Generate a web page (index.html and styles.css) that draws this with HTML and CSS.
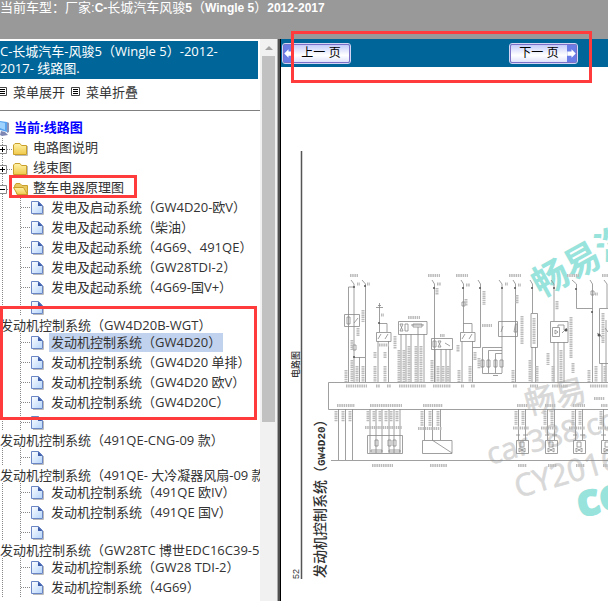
FILE: index.html
```html
<!DOCTYPE html>
<html lang="zh-CN">
<head>
  <meta charset="UTF-8">
  <title>线路图</title>
  <link rel="stylesheet" href="styles.css">
</head>
<body>
  <!-- shared icons -->
  <svg class="defs" width="0" height="0">
    <defs>
      <linearGradient id="pageFill" x1="0" y1="0" x2="1" y2="1">
        <stop offset="0" stop-color="#fff"/>
        <stop offset="1" stop-color="#b4d4fa"/>
      </linearGradient>
      <linearGradient id="folderFill" x1="0" y1="0" x2="0" y2="1">
        <stop offset="0" stop-color="#fff3a8"/>
        <stop offset="1" stop-color="#f0c94c"/>
      </linearGradient>
      <symbol id="leaf">
        <path d="M2.500 0V20M20.500 0V20M21 9.500H31" class="dots"/>
        <path d="M33 16.500H43.500V8" class="shade"/>
        <path d="M31.500 3.500H38.500L42.500 7.500V15.500H31.500Z" fill="url(#pageFill)" stroke="#6b86c4"/>
        <path d="M38 3.500V8H42.500Z" fill="#3c5ba8"/>
      </symbol>
      <symbol id="folder">
        <path d="M2.500 0V20M7 11.500H13" class="dots"/>
        <path d="M-2.500 7.500H6.500V15.500H-2.500Z" fill="#fff" stroke="#888"/>
        <path d="M0 11.500H5M2.500 9V14" stroke="#000"/>
        <path d="M15 17.500H27.500V8" class="shade"/>
        <path d="M13.500 7L15 5.500H20L21.500 7.500H26.500V16.500H13.500Z" fill="url(#folderFill)" stroke="#c9a02c"/>
      </symbol>
      <symbol id="folder-open">
        <path d="M2.500 0V20M7 11.500H13" class="dots"/>
        <path d="M-2.500 7.500H6.500V15.500H-2.500Z" fill="#fff" stroke="#888"/>
        <path d="M0 11.500H5" stroke="#000"/>
        <path d="M16 17.500H28" class="shade"/>
        <path d="M14.500 8L16 5.500H20L22 7.500H27.500V16.500H17Z" fill="#e8c860" stroke="#c9a02c"/>
        <path d="M13.500 9.500H23.500L27.500 16.500H17.500Z" fill="url(#folderFill)" stroke="#c9a02c"/>
      </symbol>
      <symbol id="list" viewBox="0 0 9 9">
        <path d="M.5 .5H8.500V8.500H.5Z" fill="#fff" stroke="#444"/>
        <path d="M2 2.500H7M2 4.500H7M2 6.500H7" stroke="#000"/>
      </symbol>
    </defs>
  </svg>

  <header class="top">当前车型：厂家:<b>C-</b>长城汽车风骏<b>5</b>（<b>Wingle 5</b>）<b>2012-2017</b></header>

  <div class="frames">
    <nav class="side">
      <div class="menu">
        <h1 class="title">C-长城汽车-风骏5（Wingle 5）-2012-2017- 线路图.</h1>
        <div class="tools">
          <svg class="list-icon cut" viewBox="2 0 7 9"><use href="#list" width="9" height="9"/></svg>
          <a href="#">菜单展开</a>
          <svg class="list-icon" viewBox="0 0 9 9"><use href="#list" width="9" height="9"/></svg>
          <a href="#">菜单折叠</a>
        </div>

        <ul class="tree">
          <li class="root">
            <svg class="pc" viewBox="0 0 14 20">
              <path d="M0 3L7 4V14L0 12Z" fill="#5aa5ee"/>
              <path d="M0 4L5 5V12L0 10Z" fill="#9fd3ff"/>
              <path d="M7 4L9 5V14L7 15Z" fill="#8a93b5"/>
              <path d="M1 13L5 14L8 17L2 18L0 17Z" fill="#7d87b2"/>
            </svg>
            <a href="#">当前:线路图</a>
          </li>
          <li><svg class="branch"><use href="#folder"/></svg><a href="#">电路图说明</a></li>
          <li><svg class="branch"><use href="#folder"/></svg><a href="#">线束图</a></li>
          <li><svg class="branch"><use href="#folder-open"/></svg><a href="#">整车电器原理图</a></li>
          <li><svg class="twig"><use href="#leaf"/></svg><a href="#">发电及启动系统（GW4D20-欧V）</a></li>
          <li><svg class="twig"><use href="#leaf"/></svg><a href="#">发电及起动系统（柴油）</a></li>
          <li><svg class="twig"><use href="#leaf"/></svg><a href="#">发电及起动系统（4G69、491QE）</a></li>
          <li><svg class="twig"><use href="#leaf"/></svg><a href="#">发电及起动系统（GW28TDI-2）</a></li>
          <li><svg class="twig"><use href="#leaf"/></svg><a href="#">发电及起动系统（4G69-国V+）</a></li>
          <li class="wrap"><svg class="twig"><use href="#leaf"/></svg><a href="#">发动机控制系统（GW4D20B-WGT）</a></li>
          <li><svg class="twig"><use href="#leaf"/></svg><a href="#" class="current">发动机控制系统（GW4D20）</a></li>
          <li><svg class="twig"><use href="#leaf"/></svg><a href="#">发动机控制系统（GW4D20 单排）</a></li>
          <li><svg class="twig"><use href="#leaf"/></svg><a href="#">发动机控制系统（GW4D20 欧V）</a></li>
          <li><svg class="twig"><use href="#leaf"/></svg><a href="#">发动机控制系统（GW4D20C）</a></li>
          <li class="wrap"><svg class="twig"><use href="#leaf"/></svg><a href="#">发动机控制系统（491QE-CNG-09 款）</a></li>
          <li class="wrap"><svg class="twig"><use href="#leaf"/></svg><a href="#">发动机控制系统（491QE- 大冷凝器风扇-09 款）</a></li>
          <li><svg class="twig"><use href="#leaf"/></svg><a href="#">发动机控制系统（491QE 欧IV）</a></li>
          <li><svg class="twig"><use href="#leaf"/></svg><a href="#">发动机控制系统（491QE 国V）</a></li>
          <li class="wrap"><svg class="twig"><use href="#leaf"/></svg><a href="#">发动机控制系统（GW28TC 博世EDC16C39-5）</a></li>
          <li><svg class="twig"><use href="#leaf"/></svg><a href="#">发动机控制系统（GW28 TDI-2）</a></li>
          <li><svg class="twig"><use href="#leaf"/></svg><a href="#">发动机控制系统（4G69）</a></li>
        </ul>
      </div>
      <div class="scrollbar">
        <div class="arrow"></div>
        <div class="thumb"></div>
      </div>
    </nav>

    <div class="splitter"></div>

    <main class="view">
      <div class="pager">
        <button type="button" class="prev">
          <svg viewBox="0 0 8 16"><path d="M0 8L4 4V6H8V10H4V12Z" fill="#fff"/></svg>
          <span>上一 页</span>
        </button>
        <button type="button" class="next">
          <span>下一 页</span>
          <svg viewBox="0 0 8 16"><path d="M8 8L4 4V6H0V10H4V12Z" fill="#fff"/></svg>
        </button>
      </div>

      <svg class="sheet" viewBox="281 67 327 534">
        <!-- watermarks -->
        <text class="mark-teal" font-size="36" transform="translate(541 298) rotate(-29)">畅易汽车</text>
        <text class="mark-teal co" font-size="44" transform="translate(580 517) rotate(-12)">co</text>
        <text class="mark-grey" font-size="31" transform="translate(528 415) rotate(-14)">畅易</text>
        <text class="mark-grey" font-size="30" transform="translate(490 465) rotate(-16)">car388.co</text>
        <text class="mark-grey" font-size="31" transform="translate(518 498) rotate(-16)">CY2016</text>

        <!-- sheet margin -->
        <path d="M301.500 151V579" stroke="#555" stroke-width="1.500"/>
        <text class="caption" font-size="9" transform="translate(299 378) rotate(-90)">电路图</text>
        <text class="caption" font-size="9" transform="translate(299 579) rotate(-90)">52</text>
        <text class="caption" font-size="14" transform="translate(325 578) rotate(-90)">发动机控制系统（<tspan class="mono">GW4D20</tspan>）</text>

        <!-- control unit and ground rail -->
        <path class="wire" d="M620 382.500H328.500V409.500H620M331 460.500H620"/>

        <!-- upper half -->
        <path class="wire" d="M351 280L354 284V382M354 287H348.500V382M362 280L365.500 284V382M354 357.500H365M359.500 357V382"/>
        <path class="wire" d="M344.500 314.500H359.500V326.500H344.500ZM347 317V324H350V317ZM354 323L358 318M353 345H356V350H353Z"/>
        <path class="wire" d="M376 307.500H383M378 305.500H381M379.500 303V332M379.500 323.500H387V332M378 341V382M388.500 341V382"/>
        <path class="wire" d="M376.500 332.500H391V341.500H376.500ZM378 339L381 334M385 339L388 334"/>
        <path class="wire" d="M398.500 321.500H427V334.500H398.500ZM400 324L403 331H400L403 324ZM405 324H408V331H405ZM411 325H424M413 324V327H422V324ZM418 327V334M401 334V382M406 334V382M411 334V382M418 334V382M424 334V382"/>
        <path class="wire" d="M432 280L434.500 284V382M431.500 338.500H452.500V349.500H431.500ZM433 341H436V347H433ZM438 341L441 347H438L441 341ZM445 343L450 346M435 349V382M441 349V382M446 349V382M450 349V382"/>
        <path class="wire" d="M461 280L463.500 284V332M462 302H465V306H462ZM463.500 323.500H472V332M460.500 332.500H475V341.500H460.500ZM462 339L465 334M469 339L472 334M462 341V382M472.500 341V382M478 280L480.500 284V347.500H472.500"/>
        <path class="wire" d="M499 280L502 284V373M513 280L515.500 284V382M498.500 321.500H517.500V336.500H498.500ZM501 332L503 326M515.500 324H517V332H514Z"/>
        <path class="wire" d="M502 347.500H482.500V373.500H502M502 350.500H488.500V373M502 353.500H495.500V373M493 375.500H498M481 360H484V367H481ZM487 360H490V367H487ZM494 360H497V367H494ZM500 360H503V367H500Z"/>
        <path class="wire" d="M530 280L532.500 284V313M531 313.500H537.500V347.500H531ZM532 347V382M535.500 347V382"/>
        <path class="wire" d="M551 280L554 284V321M550.500 321.500H568V342.500H550.500ZM552.500 327.500H559.500V336.500H552.500ZM555 330L558 332L555 334ZM562 333L567 328M558 327V325H564V330M554 342V382M558 342V382M564 342V382"/>
        <path class="wire" d="M572 280L576.500 284V308.500H592.500M590 280L592.500 284V382M591 291H594V295H591ZM604 280L607 284V308M620 308.500H599.500V363.500H620M602 363V382M606 320V382M597 333L602 337M605 328L608 332"/>
        <g fill="#555">
          <circle cx="354" cy="287" r="1"/><circle cx="365" cy="286" r="1"/><circle cx="354" cy="357" r="1"/>
          <circle cx="379" cy="323" r="1"/><circle cx="434" cy="288" r="1"/><circle cx="463" cy="288" r="1"/>
          <circle cx="480" cy="288" r="1"/><circle cx="502" cy="288" r="1"/><circle cx="515" cy="288" r="1"/>
          <circle cx="532" cy="288" r="1"/><circle cx="554" cy="288" r="1"/><circle cx="576" cy="289" r="1"/>
          <circle cx="592" cy="312" r="1"/><circle cx="599" cy="335" r="1.500"/><circle cx="566" cy="330" r="1.500"/>
        </g>

        <!-- lower half -->
        <path class="wire" d="M338.500 409V460M345.500 409V460M352.500 409V460"/>
        <path class="wire" d="M370 409V453M376 409V453M382 409V453M389 409V453M394 409V453M400 409V453M367.500 435.500H402.500V453.500H367.500ZM375 440H378V446H375ZM388 440H391V446H388ZM393 440H396V446H393ZM371 450H382V452H371ZM389 450H400V452H389Z"/>
        <path class="wire" d="M424.500 409V440M432.500 409V440M440.500 409V440M422.500 440.500H452V453.500H422.500ZM432 440L452 453"/>
        <path class="wire" d="M518.500 409V440M525.500 409V440M516.500 440.500H528.500V453.500H516.500ZM520 442H524V447H520ZM519 448L525 452V448L519 452Z"/>
        <path class="wire" d="M547.500 409V440M554.500 409V440M545.500 440.500H557.500V453.500H545.500ZM549 442H553V447H549ZM548 448L554 452V448L548 452Z"/>
        <path class="wire" d="M575.500 409V440M582.500 409V440M573.500 440.500H585.500V453.500H573.500ZM577 442H581V447H577ZM576 448L582 452V448L576 452Z"/>
        <path class="wire" d="M603.500 409V440M601.500 440.500H613V453.500H601.500ZM605 442H609V447H605ZM604 448L610 452V448L604 452Z"/>
        <path class="wire" d="M516 435H520M523 435H528M545 435H549M552 435H557M573 435H577M580 435H585M601 435H606"/>

        <!-- wire codes, too small to read -->
        <path class="note" d="M350 275.500H358M428 275.500H440M456 275.500H468M509 275.500H521M567 275.500H579M602 275.500H608M408 317.500H420M440 335.500H445M482 325.500H492M379 345H389M357 284H360M367 284H370M437 284H441M466 285H470M505 284H508M518 285H521M381 315H384M595 294H598M594 398.500H605"/>
        <path class="note" d="M346 386H367M376 386H380M387 386H391M399 386H426M433 386H451M461 386H464M471 386H475M513 386H517M530 386H538M552 386H568M590 386H610M337 405.500H355M370 405.500H402M423 405.500H443M517 405.500H528M545 405.500H556M573 405.500H585M601 405.500H608"/>
        <path class="note" d="M372 465.500H393M430 465.500H447M518 465.500H527M548 465.500H557M576 465.500H585M603 465.500H608M365 427.500H402M418 428.500H442M513 428H529M541 428H557M569 428H585M598 428H608"/>
        <path class="note" d="M346 370V382M352 360V382M357 366V382M363 366V382M363 310V322M352 340V350M358 328V336M375 352V358M385 352V358M375 366V382M385 366V382M395 336V349M399 350V382M404 350V382M409 346V382M416 346V382M421 346V382M432 360V382M438 366V382M443 366V382M448 366V382M459 370V382M470 366V382"/>
        <path class="note" d="M437 288V295M484 291V305M466 299V306M479 358V369M458 345V352M475 352V360M513 370V382M517 295V304M522 316V344M534 318V344M530 360V382M537 366V382M557 301V310M571 317V358M548 353V365M553 366V382M561 350V382M573 363V373M589 370V382M596 366V382M603 313V343M605 366V382"/>
        <path class="note" d="M336 411V422M343 411V422M350 411V422M368 411V422M374 411V422M380 411V422M386 411V422M391 411V422M397 411V422M422 411V426M430 411V426M438 411V426M516 411V425M523 411V425M545 411V425M552 411V425M573 411V425M580 411V425M601 411V425"/>
      </svg>
    </main>
  </div>

  <!-- highlight frames -->
  <div class="hint hint-folder"></div>
  <div class="hint hint-items"></div>
  <div class="hint hint-pager"></div>
</body>
</html>
```
FILE: styles.css
```css
body {
  margin: 0;
  position: relative;
  background: white;
  font-family: "Open Sans", "Noto Sans CJK SC", sans-serif;
  font-size: 13px;
  color: #333;
}

a {
  color: inherit;
  text-decoration: none;
}

.defs {
  position: absolute;
}

.top {
  height: 39px;
  background: #999;
  color: white;
  font-family: "Liberation Sans", "Noto Sans CJK SC", sans-serif;
  line-height: 16px;
  white-space: nowrap;
  overflow: hidden;
}

.top b {
  font-size: 12px;
}

.frames {
  display: flex;
  height: calc(100vh - 39px);
  overflow: hidden;
}

/* left frame */
.side {
  display: flex;
  flex: 0 0 277px;
  overflow: hidden;
}

.menu {
  flex: 1;
  min-width: 0;
  overflow: hidden;
}

.title {
  margin: 2px 2px 0 0;
  padding: 2px 24px 2px 0;
  background: #069;
  color: white;
  font-size: 13px;
  font-weight: normal;
  line-height: 17px;
}

.tools {
  display: flex;
  gap: 6px;
  height: 31px;
  border-bottom: 1px solid #808080;
  line-height: 26px;
}

.list-icon {
  width: 9px;
  height: 9px;
  margin-top: 8px;
}

.list-icon.cut {
  width: 7px;
}

.tree {
  list-style: none;
  margin: 7px 0 0;
  padding: 0;
}

.tree li {
  display: flex;
  height: 20px;
  line-height: 19px;
  white-space: nowrap;
}

.tree svg {
  flex: none;
  height: 20px;
}

.branch {
  width: 33px;
}

.twig {
  width: 49px;
}

.twig + a {
  height: 19px;
  padding: 0 2px;
}

.pc {
  width: 14px;
}

.tree .root {
  color: blue;
  font-weight: bold;
}

.tree .current {
  background: #c1d2ee;
}

/* long names drop below their icon */
.tree .wrap {
  flex-direction: column;
  height: 35px;
}

.tree .wrap svg {
  height: 18px;
}

.tree .wrap a {
  height: 17px;
  padding: 0;
}

.dots {
  fill: none;
  stroke: #888;
  stroke-dasharray: 1 1;
}

.shade {
  fill: none;
  stroke: #bbb;
}

.scrollbar {
  flex: 0 0 13px;
  padding: 0 2px;
  background: #f1f1f1;
}

.arrow {
  width: 0;
  margin: 7px auto 6px;
  border: 4px solid transparent;
  border-top: 0;
  border-bottom-color: #a3a3a3;
}

.thumb {
  height: 366px;
  background: #c1c1c1;
}

.splitter {
  flex: 0 0 2px;
  background: #505050;
  border-left: 1px solid #aaa;
  border-right: 1px solid black;
}

/* right frame */
.view {
  flex: 1;
  min-width: 0;
  overflow: hidden;
}

.pager {
  display: flex;
  align-items: center;
  gap: 160px;
  height: 28px;
  padding: 0 2px;
  background: #069;
}

.pager button {
  display: flex;
  flex: none;
  width: 67px;
  height: 19px;
  padding: 0;
  border: 1px solid #7b6fc8;
  border-radius: 2px;
  outline: 1px solid #d4d4f4;
  background: linear-gradient(#c4cbfa, #fff 60%, #dfe2fc);
  color: black;
  font-family: "Liberation Sans", "Noto Sans CJK SC", sans-serif;
  font-size: 12px;
  line-height: 17px;
}

.pager svg {
  flex: none;
  width: 9px;
  height: 17px;
  background: #6a7de6;
}

.pager span {
  flex: 1;
  text-align: center;
}

.sheet {
  display: block;
  width: 100%;
}

.wire {
  fill: none;
  stroke: #888;
  stroke-width: 0.8;
}

.note {
  fill: none;
  stroke: #bbb;
  stroke-width: 3;
  stroke-dasharray: 1.500 0.700;
}

.caption {
  fill: #333;
  font-family: "Liberation Sans", "Noto Sans CJK SC", sans-serif;
  font-weight: 500;
}

.mono {
  font-family: "Liberation Mono", monospace;
  font-size: 11px;
  font-weight: bold;
}

.mark-teal {
  fill: #98e3db;
  font-weight: bold;
}

.mark-teal.co {
  stroke: #98e3db;
  stroke-width: 2;
  stroke-linejoin: round;
}

.mark-grey {
  fill: #d8d8d8;
  stroke: #d8d8d8;
  stroke-width: 0.6;
}

/* red frames over both panes */
.hint {
  position: absolute;
  box-sizing: border-box;
  border: 3px solid #ff3b3b;
}

.hint-folder {
  top: 175px;
  left: 9px;
  width: 128px;
  height: 23px;
}

.hint-items {
  top: 306px;
  left: 0;
  width: 257px;
  height: 114px;
}

.hint-pager {
  top: 31px;
  left: 291px;
  width: 301px;
  height: 52px;
}
```
